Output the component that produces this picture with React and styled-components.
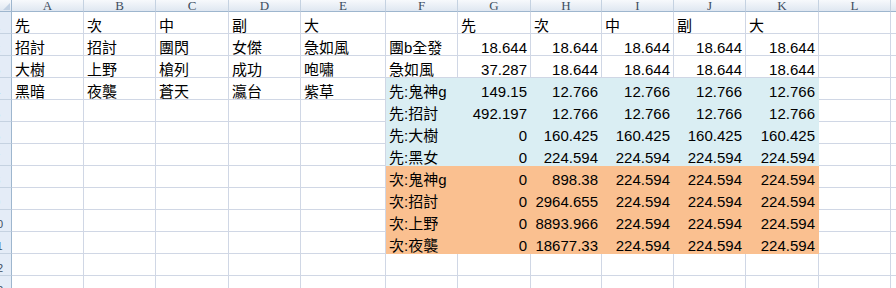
import React from "react";
import styled, { createGlobalStyle } from "styled-components";

const GlobalStyle = createGlobalStyle`
  html, body {
    margin: 0;
    padding: 0;
    background: #fff;
  }
`;

const COLS = ["A", "B", "C", "D", "E", "F", "G", "H", "I", "J", "K", "L", ""];
const WIDTHS = [72, 72, 73, 72, 85, 72, 73, 71, 72, 72, 73, 72];

const BLUE = "#daeef3";
const ORANGE = "#fac090";

// one entry per sheet row; fill applies to columns F..K
const rows = [
  { cells: ["先", "次", "中", "副", "大", "", "先", "次", "中", "副", "大"] },
  { cells: ["招討", "招討", "團閃", "女傑", "急如風", "團b全發", 18.644, 18.644, 18.644, 18.644, 18.644] },
  { cells: ["大樹", "上野", "槍列", "成功", "咆嘯", "急如風", 37.287, 18.644, 18.644, 18.644, 18.644] },
  { cells: ["黑暗", "夜襲", "蒼天", "瀛台", "紫草", "先:鬼神g", 149.15, 12.766, 12.766, 12.766, 12.766], fill: BLUE },
  { cells: ["", "", "", "", "", "先:招討", 492.197, 12.766, 12.766, 12.766, 12.766], fill: BLUE },
  { cells: ["", "", "", "", "", "先:大樹", 0, 160.425, 160.425, 160.425, 160.425], fill: BLUE },
  { cells: ["", "", "", "", "", "先:黑女", 0, 224.594, 224.594, 224.594, 224.594], fill: BLUE },
  { cells: ["", "", "", "", "", "次:鬼神g", 0, 898.38, 224.594, 224.594, 224.594], fill: ORANGE },
  { cells: ["", "", "", "", "", "次:招討", 0, 2964.655, 224.594, 224.594, 224.594], fill: ORANGE },
  { cells: ["", "", "", "", "", "次:上野", 0, 8893.966, 224.594, 224.594, 224.594], fill: ORANGE },
  { cells: ["", "", "", "", "", "次:夜襲", 0, 18677.33, 224.594, 224.594, 224.594], fill: ORANGE },
  { cells: [] },
  { cells: [] },
];

const Sheet = styled.div`
  width: 896px;
  height: 288px;
  overflow: hidden;
  display: grid;
  grid-template-columns: 12px ${WIDTHS.map((w) => `${w}px`).join(" ")} 1fr;
  grid-auto-rows: 22px;
  grid-template-rows: 12px;
  font-family: "Liberation Sans", "Noto Sans CJK TC", sans-serif;
`;

const Corner = styled.div`
  position: relative;
  box-sizing: border-box;
  background: linear-gradient(#f7f9fc, #dfe7f1);
  border-right: 1px solid #9eb6ce;
  border-bottom: 1px solid #9eb6ce;

  &::after {
    content: "";
    position: absolute;
    right: 1px;
    bottom: 1px;
    border-left: 7px solid transparent;
    border-bottom: 7px solid #c2d1e3;
  }
`;

const ColHeader = styled.div`
  box-sizing: border-box;
  display: flex;
  align-items: flex-end;
  justify-content: center;
  overflow: hidden;
  background: linear-gradient(#f7f9fc, #dfe7f1);
  border-right: 1px solid #c5d2e1;
  border-bottom: 1px solid #9eb6ce;
  font-family: "Liberation Serif", serif;
  font-size: 13px;
  line-height: 11px;
  color: #3d4d60;
`;

const RowHeader = styled.div`
  box-sizing: border-box;
  display: flex;
  align-items: flex-end;
  overflow: hidden;
  background: #e4ecf7;
  border-right: 1px solid #9eb6ce;
  border-bottom: 1px solid #c5d2e1;
  font-size: 11px;
  line-height: 14px;
  color: #3d4d60;
`;

const RowNumber = styled.span`
  flex: none;
  width: 24px;
  margin-left: -15px;
  text-align: center;
  white-space: nowrap;
`;

const Cell = styled.div`
  box-sizing: border-box;
  display: flex;
  align-items: flex-end;
  justify-content: ${(p) => (p.$num ? "flex-end" : "flex-start")};
  padding: 0 3px;
  white-space: nowrap;
  background: ${(p) => p.$fill || "#fff"};
  border-right: 1px solid ${(p) => p.$fill || "#d0d7e5"};
  border-bottom: 1px solid ${(p) => p.$fill || "#d0d7e5"};
  font-size: 15px;
  line-height: 15px;
  color: #000;
`;

export default function App() {
  return (
    <>
      <GlobalStyle />
      <Sheet>
        <Corner />
        {COLS.map((c, i) => (
          <ColHeader key={`h${i}`}>{c}</ColHeader>
        ))}
        {rows.map((row, r) => (
          <React.Fragment key={r}>
            <RowHeader>
              <RowNumber>{r + 1}</RowNumber>
            </RowHeader>
            {COLS.map((_, c) => {
              const v = row.cells[c];
              const num = typeof v === "number";
              const fill = row.fill && c >= 5 && c <= 10 ? row.fill : undefined;
              return (
                <Cell key={c} $num={num} $fill={fill}>
                  {v === undefined ? "" : String(v)}
                </Cell>
              );
            })}
          </React.Fragment>
        ))}
      </Sheet>
    </>
  );
}
